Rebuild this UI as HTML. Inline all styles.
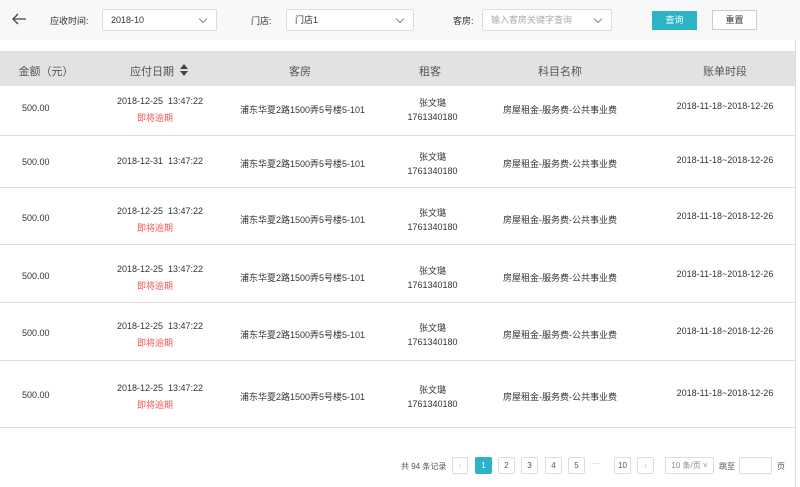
<!DOCTYPE html>
<html><head><meta charset="utf-8"><style>
*{margin:0;padding:0;box-sizing:border-box}
body{width:800px;height:487px;overflow:hidden;background:#fff;font-family:"Liberation Sans","Noto Sans CJK SC",sans-serif;font-size:9px;color:#333;position:relative}
.a{position:absolute}
.top{left:0;top:0;width:800px;height:40px;background:#f8f8f8}
.sel{height:22px;border:1px solid #ddd;background:#fff;border-radius:2px;padding-left:8px;line-height:20px;font-size:9px}
.sel:after{content:"";position:absolute;right:10px;top:6px;width:5px;height:5px;border-right:1px solid #888;border-bottom:1px solid #888;transform:rotate(45deg)}
.lbl{font-size:9px;color:#333;top:14px}
.hdr{left:0;top:51px;width:795px;height:35px;background:#e2e2e2}
.h{top:63px;font-size:11px;color:#555;text-align:center}
.row{left:0;width:795px;border-bottom:1px solid #ddd}
.c{text-align:center;font-size:9px;color:#333;position:absolute}
.red{color:#e55}
.pg{top:457px;height:17px;border:1px solid #ddd;border-radius:2px;text-align:center;line-height:15px;font-size:8px;color:#555;background:#fff}
</style></head><body>
<div class="a top"></div>
<svg class="a" style="left:11px;top:12px" width="16" height="14"><path d="M15 7H2M7 2L2 7l5 5" stroke="#444" stroke-width="1.3" fill="none"/></svg>
<div class="a lbl" style="left:50px">应收时间:</div>
<div class="a sel" style="left:102px;top:9px;width:115px">2018-10</div>
<div class="a lbl" style="left:251px">门店:</div>
<div class="a sel" style="left:286px;top:9px;width:128px">门店1</div>
<div class="a lbl" style="left:453px">客房:</div>
<div class="a sel" style="left:482px;top:9px;width:130px;color:#aaa">输入客房关键字查询</div>
<div class="a" style="left:652px;top:11px;width:45px;height:19px;background:#2cb3c6;color:#fff;text-align:center;line-height:19px;font-size:9px">查询</div>
<div class="a" style="left:712px;top:10px;width:45px;height:20px;border:1px solid #ccc;background:#fff;text-align:center;line-height:18px;font-size:9px">重置</div>
<div class="a" style="left:795px;top:40px;width:1px;height:447px;background:#ddd"></div>
<div class="a hdr"></div>
<div class="a h" style="left:0;width:92px">金额（元）</div>
<div class="a h" style="left:112px;width:80px">应付日期</div>
<svg class="a" style="left:180px;top:64px" width="8" height="12"><path d="M4 0L8 5H0zM4 12L8 7H0z" fill="#444"/></svg>
<div class="a h" style="left:250px;width:100px">客房</div>
<div class="a h" style="left:400px;width:60px">租客</div>
<div class="a h" style="left:500px;width:120px">科目名称</div>
<div class="a h" style="left:665px;width:120px">账单时段</div>

<div class="a row" style="top:86px;height:50px"></div>
<div class="a row" style="top:136px;height:52px"></div>
<div class="a row" style="top:188px;height:57px"></div>
<div class="a row" style="top:245px;height:58px"></div>
<div class="a row" style="top:303px;height:58px"></div>
<div class="a row" style="top:361px;height:67px"></div>

<div id="rows"></div>
<script>
var rs=[[103,1],[157,0],[213,1],[271,1],[328,1],[390,1]];
var h='';
rs.forEach(function(r){var y=r[0];
h+='<div class="c" style="left:22px;top:'+y+'px;text-align:left">500.00</div>';
if(r[1]){h+='<div class="c" style="left:105px;width:110px;top:'+(y-7)+'px">2018-12-25&nbsp;&nbsp;13:47:22</div><div class="c red" style="left:105px;width:100px;top:'+(y+8)+'px">即将逾期</div>';}
else h+='<div class="c" style="left:105px;width:110px;top:'+(y-1)+'px">2018-12-31&nbsp;&nbsp;13:47:22</div>';
h+='<div class="c" style="left:230px;width:145px;top:'+y+'px">浦东华夏2路1500弄5号楼5-101</div>';
h+='<div class="c" style="left:395px;width:75px;top:'+(y-7)+'px">张文璐</div><div class="c" style="left:395px;width:75px;top:'+(y+9)+'px">1761340180</div>';
h+='<div class="c" style="left:490px;width:140px;top:'+y+'px">房屋租金-服务费-公共事业费</div>';
h+='<div class="c" style="left:665px;width:120px;top:'+(y-2)+'px">2018-11-18~2018-12-26</div>';});
document.getElementById('rows').innerHTML=h;
</script>
<div class="a" style="left:401px;top:461px;font-size:8px;color:#555">共 94 条记录</div>
<div class="a pg" style="left:452px;width:16px;color:#ccc">‹</div>
<div class="a pg" style="left:475px;width:17px;background:#2cb3c6;border-color:#2cb3c6;color:#fff">1</div>
<div class="a pg" style="left:498px;width:17px">2</div>
<div class="a pg" style="left:521px;width:17px">3</div>
<div class="a pg" style="left:545px;width:17px">4</div>
<div class="a pg" style="left:568px;width:17px">5</div>
<div class="a" style="left:592px;top:459px;font-size:8px;color:#aaa">···</div>
<div class="a pg" style="left:614px;width:17px">10</div>
<div class="a pg" style="left:637px;width:17px;color:#bbb">›</div>
<div class="a pg" style="left:665px;width:49px;color:#888">10 条/页 ˅</div>
<div class="a" style="left:719px;top:461px;font-size:8px;color:#555">跳至</div>
<div class="a pg" style="left:739px;width:33px"></div>
<div class="a" style="left:777px;top:461px;font-size:8px;color:#555">页</div>
</body></html>
